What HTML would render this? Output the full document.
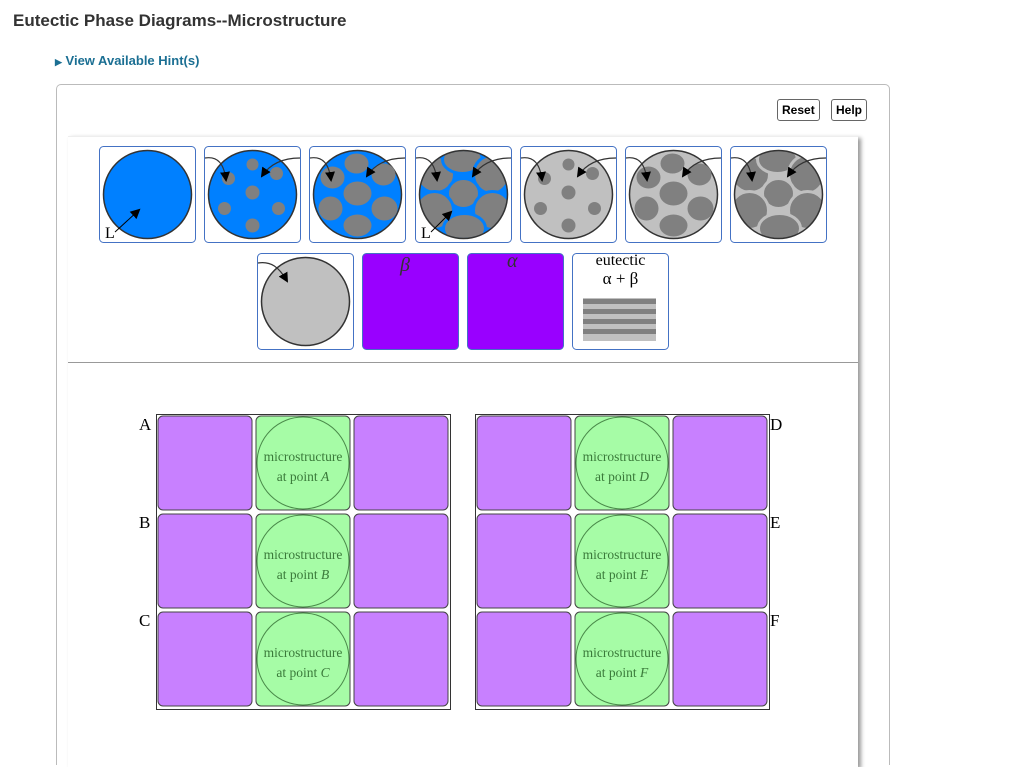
<!DOCTYPE html>
<html><head><meta charset="utf-8"><style>
html,body{margin:0;background:#fff;font-family:"Liberation Sans",sans-serif;width:1024px;height:756px;overflow:hidden;}
.t{position:absolute;left:13px;top:11px;font-size:17px;font-weight:bold;color:#333;}
.h{position:absolute;left:55px;top:53px;font-size:13px;font-weight:bold;color:#1b6f93;}
.outer{position:absolute;left:56px;top:84px;width:832px;height:680px;border:1px solid #bbb;border-bottom:none;border-radius:5px 5px 0 0;}
.btn{position:absolute;top:99px;height:20px;border:1px solid #666;border-radius:3px;font-size:12px;font-weight:bold;line-height:20px;padding:0 4px;background:#fff;}
.inner{position:absolute;left:68px;top:136px;width:790px;height:630px;background:#fff;box-shadow:3px 2px 4px #999;border-top:1px solid #eee;}
svg{position:absolute;left:0;top:0;}
</style></head><body>
<div class="t">Eutectic Phase Diagrams--Microstructure</div>
<div class="h"><span style="font-size:9px;">▶</span> View Available Hint(s)</div>
<div class="outer"></div>
<div class="btn" style="left:777px;">Reset</div>
<div class="btn" style="left:831px;">Help</div>
<div class="inner"></div>
<svg width="1024" height="756" viewBox="0 0 1024 756">
<defs>
<clipPath id="cc"><circle cx="48.5" cy="48.5" r="43.5"/></clipPath>
<marker id="ar" markerWidth="10" markerHeight="10" refX="8" refY="5" orient="auto" markerUnits="userSpaceOnUse"><path d="M0,0 L10,5 L0,10z" fill="#000"/></marker>
<g id="gs" fill="#808080"><circle cx="-24" cy="-16" r="6.5"/><circle cx="0" cy="-30" r="6"/><circle cx="24" cy="-21" r="6.5"/><circle cx="0" cy="-2" r="7"/><circle cx="-28" cy="14" r="6.5"/><circle cx="26" cy="14" r="6.5"/><circle cx="0" cy="31" r="7"/></g>
<g id="gm" fill="#808080"><ellipse cx="-25" cy="-17" rx="12" ry="11"/><ellipse cx="-1" cy="-31" rx="12" ry="10"/><ellipse cx="26" cy="-20" rx="12" ry="11"/><ellipse cx="0" cy="-1" rx="14" ry="12"/><ellipse cx="-27" cy="14" rx="12" ry="12"/><ellipse cx="27" cy="14" rx="13" ry="12"/><ellipse cx="0" cy="31" rx="14" ry="11"/></g>
<g id="gl"><ellipse cx="-28" cy="-20" rx="19" ry="18"/><ellipse cx="-1" cy="-35" rx="20" ry="14"/><ellipse cx="28" cy="-20" rx="18" ry="19"/><ellipse cx="0" cy="-1" rx="16" ry="15"/><ellipse cx="-29" cy="16" rx="19" ry="19"/><ellipse cx="29" cy="16" rx="19" ry="19"/><ellipse cx="1" cy="34" rx="21" ry="15"/></g>
<g id="tile"><rect x="0.5" y="0.5" width="96" height="96" rx="4" fill="#fff" stroke="#4472c4"/></g>
<g id="arrs" fill="none" stroke="#333" stroke-width="1.2"><path d="M1,12 C14,10 20,18 22,34" marker-end="url(#ar)"/><path d="M96,12 C78,12 66,18 58,30" marker-end="url(#ar)"/></g>
<g id="pur"><rect x="2" y="2" width="94" height="94" rx="5" fill="#c880ff" stroke="#444"/></g>
<g id="grn"><rect x="2" y="2" width="94" height="94" rx="5" fill="#a6fca6" stroke="#444"/><circle cx="49" cy="49" r="46" fill="none" stroke="#4a8a4a"/></g>
</defs>
<g transform="translate(99,146)"><use href="#tile"/><circle cx="48.5" cy="48.5" r="44" fill="#0080ff" stroke="#333" stroke-width="1.5"/><text x="6" y="92" font-family="Liberation Serif" font-size="16">L</text><line x1="16" y1="86" x2="40" y2="64" stroke="#000" marker-end="url(#ar)"/></g>
<g transform="translate(204,146)"><use href="#tile"/><circle cx="48.5" cy="48.5" r="44" fill="#0080ff" stroke="#333" stroke-width="1.5"/><use href="#gs" x="48.5" y="48.5"/><use href="#arrs"/></g>
<g transform="translate(309,146)"><use href="#tile"/><circle cx="48.5" cy="48.5" r="44" fill="#0080ff" stroke="#333" stroke-width="1.5"/><use href="#gm" x="48.5" y="48.5"/><use href="#arrs"/></g>
<g transform="translate(415,146)"><use href="#tile"/><circle cx="48.5" cy="48.5" r="44" fill="#0080ff"/><g clip-path="url(#cc)"><use href="#gl" x="48.5" y="48.5" fill="#808080" stroke="#0080ff" stroke-width="3"/></g><circle cx="48.5" cy="48.5" r="44" fill="none" stroke="#333" stroke-width="1.5"/><use href="#arrs"/><text x="6" y="92" font-family="Liberation Serif" font-size="16">L</text><line x1="16" y1="86" x2="36" y2="66" stroke="#000" marker-end="url(#ar)"/></g>
<g transform="translate(520,146)"><use href="#tile"/><circle cx="48.5" cy="48.5" r="44" fill="#c0c0c0" stroke="#333" stroke-width="1.5"/><use href="#gs" x="48.5" y="48.5"/><use href="#arrs"/></g>
<g transform="translate(625,146)"><use href="#tile"/><circle cx="48.5" cy="48.5" r="44" fill="#c0c0c0" stroke="#333" stroke-width="1.5"/><use href="#gm" x="48.5" y="48.5"/><use href="#arrs"/></g>
<g transform="translate(730,146)"><use href="#tile"/><circle cx="48.5" cy="48.5" r="44" fill="#c0c0c0"/><g clip-path="url(#cc)"><use href="#gl" x="48.5" y="48.5" fill="#808080" stroke="#c0c0c0" stroke-width="3"/></g><circle cx="48.5" cy="48.5" r="44" fill="none" stroke="#333" stroke-width="1.5"/><use href="#arrs"/></g>
<g transform="translate(257,253)"><use href="#tile"/><circle cx="48.5" cy="48.5" r="44" fill="#c0c0c0" stroke="#333" stroke-width="1.5"/><path d="M1,10 C14,8 22,14 30,28" fill="none" stroke="#333" stroke-width="1.2" marker-end="url(#ar)"/></g>
<rect x="362.5" y="253.5" width="96" height="96" rx="4" fill="#9900ff" stroke="#4472c4"/>
<text x="400" y="271" font-family="Liberation Serif" font-style="italic" font-size="20" fill="#333">β</text>
<rect x="467.5" y="253.5" width="96" height="96" rx="4" fill="#9900ff" stroke="#4472c4"/>
<text x="507" y="267" font-family="Liberation Serif" font-style="italic" font-size="20" fill="#333">α</text>
<g transform="translate(572,253)"><use href="#tile"/><text x="48.5" y="12" text-anchor="middle" font-family="Liberation Serif" font-size="16">eutectic</text><text x="48.5" y="31" text-anchor="middle" font-family="Liberation Serif" font-size="17">α + β</text>
<rect x="11" y="45" width="73" height="43" fill="#c0c0c0"/><g fill="#808080"><rect x="11" y="46" width="73" height="5"/><rect x="11" y="56" width="73" height="5"/><rect x="11" y="66" width="73" height="5"/><rect x="11" y="76" width="73" height="5"/></g></g>
<line x1="68" y1="362.5" x2="858" y2="362.5" stroke="#999"/>
<g font-family="Liberation Serif" font-size="13.5" fill="#3a7a3a" text-anchor="middle">
<g transform="translate(156,414)">
<rect x="0.5" y="0.5" width="294" height="295" fill="#fff" stroke="#333"/>
<use href="#pur"/><use href="#grn" x="98"/><use href="#pur" x="196"/>
<use href="#pur" y="98"/><use href="#grn" x="98" y="98"/><use href="#pur" x="196" y="98"/>
<use href="#pur" y="196"/><use href="#grn" x="98" y="196"/><use href="#pur" x="196" y="196"/>
<text x="147" y="47">microstructure</text><text x="147" y="67">at point <tspan font-style="italic">A</tspan></text>
<text x="147" y="145">microstructure</text><text x="147" y="165">at point <tspan font-style="italic">B</tspan></text>
<text x="147" y="243">microstructure</text><text x="147" y="263">at point <tspan font-style="italic">C</tspan></text>
</g>
<g transform="translate(475,414)">
<rect x="0.5" y="0.5" width="294" height="295" fill="#fff" stroke="#333"/>
<use href="#pur"/><use href="#grn" x="98"/><use href="#pur" x="196"/>
<use href="#pur" y="98"/><use href="#grn" x="98" y="98"/><use href="#pur" x="196" y="98"/>
<use href="#pur" y="196"/><use href="#grn" x="98" y="196"/><use href="#pur" x="196" y="196"/>
<text x="147" y="47">microstructure</text><text x="147" y="67">at point <tspan font-style="italic">D</tspan></text>
<text x="147" y="145">microstructure</text><text x="147" y="165">at point <tspan font-style="italic">E</tspan></text>
<text x="147" y="243">microstructure</text><text x="147" y="263">at point <tspan font-style="italic">F</tspan></text>
</g>
</g>
<g font-family="Liberation Serif" font-size="17" fill="#000">
<text x="139" y="430">A</text><text x="139" y="528">B</text><text x="139" y="626">C</text>
<text x="770" y="430">D</text><text x="770" y="528">E</text><text x="770" y="626">F</text>
</g>
</svg>
</body></html>
